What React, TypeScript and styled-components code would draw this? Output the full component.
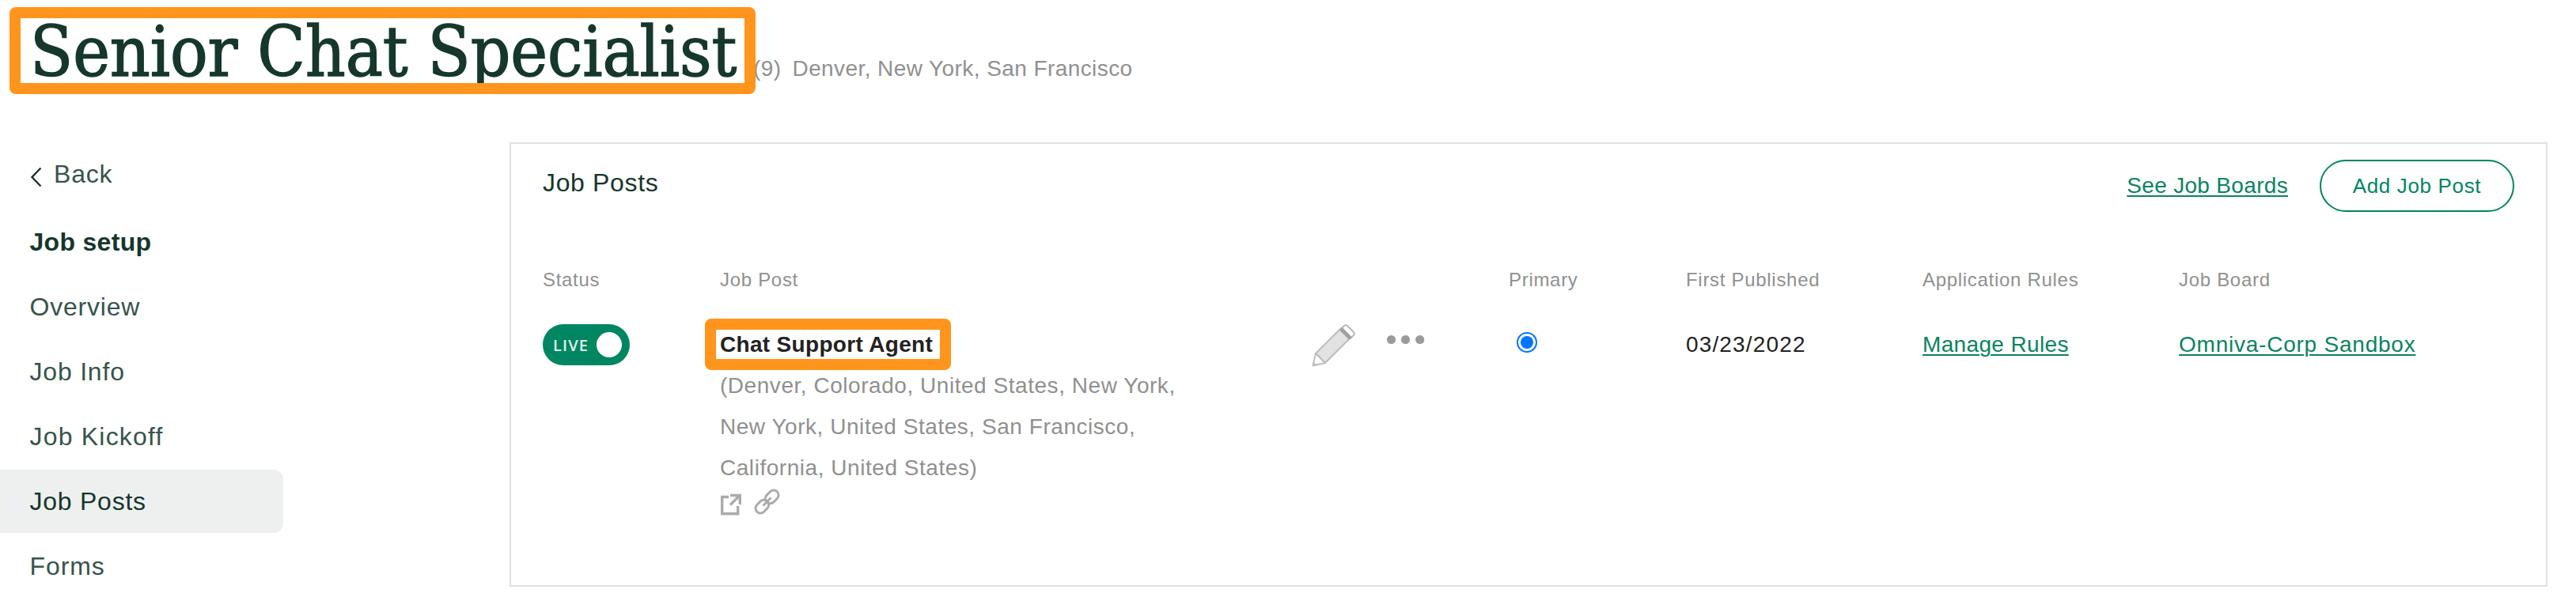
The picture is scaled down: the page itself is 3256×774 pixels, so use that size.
import React from 'react';
import styled, { createGlobalStyle } from 'styled-components';

const GlobalStyle = createGlobalStyle`
  * { box-sizing: border-box; }
  body {
    margin: 0;
    background: #fff;
    font-family: 'Liberation Sans', Arial, sans-serif;
    color: #222;
  }
`;

const Page = styled.div`
  width: 3256px;
  height: 774px;
  overflow: hidden;
`;

const Header = styled.header`
  display: flex;
  align-items: baseline;
  height: 180px;
  padding: 9px 0 0 38px;
`;

const TitleWrap = styled.div`
  position: relative;
  width: 914px;
`;

const Title = styled.h1`
  margin: 0;
  font-family: 'DejaVu Serif Condensed', 'DejaVu Serif', serif;
  font-stretch: condensed;
  font-size: 88px;
  font-weight: 400;
  line-height: 114px;
  letter-spacing: -0.1px;
  white-space: nowrap;
  color: #15372c;
  -webkit-text-stroke: 1.4px #15372c;
`;

/* Orange callout frame drawn over the text it surrounds */
const Frame = styled.div<{ $x: number; $y: number; $w: number; $h: number }>`
  position: absolute;
  left: ${(p) => p.$x}px;
  top: ${(p) => p.$y}px;
  width: ${(p) => p.$w}px;
  height: ${(p) => p.$h}px;
  border: 14px solid #ff951c;
  border-radius: 8px;
`;

const Meta = styled.div<{ $gap?: number }>`
  margin-left: ${(p) => p.$gap ?? 0}px;
  font-size: 28px;
  letter-spacing: 0.42px;
  white-space: nowrap;
  color: #909090;
`;

const Body = styled.div`
  display: flex;
  align-items: flex-start;
`;

const Sidebar = styled.nav`
  display: flex;
  flex-direction: column;
  gap: 2px;
  width: 358px;
  margin-right: 286px;
`;

const NavItem = styled.a<{ $active?: boolean; $strong?: boolean; $spacing: number }>`
  display: flex;
  align-items: center;
  height: 80px;
  padding-left: 37.5px;
  border-radius: 0 12px 12px 0;
  font-size: 32px;
  white-space: nowrap;
  font-weight: ${(p) => (p.$strong ? 700 : 400)};
  letter-spacing: ${(p) => p.$spacing}px;
  color: ${(p) => (p.$active || p.$strong ? '#15372c' : '#36544a')};
  background: ${(p) => (p.$active ? '#eef0ef' : 'transparent')};
`;

const BackLink = styled(NavItem)`
  height: 84px;
  gap: 12.5px;
  padding-bottom: 3px;

  svg { margin-top: 7px; }
`;

const Panel = styled.main`
  width: 2576px;
  height: 562px;
  padding: 20px 40px;
  border: 2px solid #e1e1e1;
`;

const PanelHead = styled.div`
  display: flex;
  align-items: center;
  height: 66px;
  margin-bottom: 66px;
`;

const PanelTitle = styled.h2`
  flex: 1;
  margin: 0;
  padding-bottom: 8px;
  font-size: 32px;
  font-weight: 400;
  letter-spacing: 0.65px;
  color: #15372c;
`;

const TextLink = styled.a<{ $spacing: number }>`
  font-size: 28px;
  letter-spacing: ${(p) => p.$spacing}px;
  white-space: nowrap;
  color: #0b8461;
  text-decoration: underline;
  text-decoration-thickness: 2px;
  text-underline-offset: 3px;
`;

const OutlineButton = styled.button`
  width: 246px;
  height: 66px;
  margin-left: 40px;
  padding: 1px 0 0;
  border: 2px solid #008661;
  border-radius: 33px;
  background: #fff;
  font: 26px 'Liberation Sans', Arial, sans-serif;
  letter-spacing: 0.65px;
  color: #008661;
`;

const Row = styled.div`
  display: grid;
  grid-template-columns: 224px 748px 249px 224px 299px 324px 1fr;
`;

const LabelRow = styled(Row)`
  margin-bottom: 36px;
  font-size: 24px;
  line-height: 40px;
  letter-spacing: 0.7px;
  color: #909090;
`;

const PostRow = styled(Row)`
  font-size: 28px;
  line-height: 52px;
`;

const Toggle = styled.div`
  display: flex;
  align-items: center;
  justify-content: space-between;
  width: 110px;
  height: 52px;
  padding: 0 10px 0 13px;
  border-radius: 26px;
  background: #008661;
  font: 600 20px 'Open Sans', sans-serif;
  letter-spacing: 1.1px;
  color: #e2f2ed;
`;

const Knob = styled.span`
  width: 32px;
  height: 32px;
  border-radius: 50%;
  background: #fff;
`;

const PostCell = styled.div`
  position: relative;
`;

const PostName = styled.div`
  font-weight: 700;
  letter-spacing: 0.32px;
`;

const Places = styled.div`
  width: 600px;
  letter-spacing: 0.54px;
  color: #909090;
`;

const PlaceLine = styled.div`
  white-space: nowrap;
`;

const PostIcons = styled.div`
  display: flex;
  gap: 16px;
`;

const Actions = styled.div`
  display: flex;
  gap: 38px;
`;

const RadioCell = styled.div`
  padding: 10px 0 0 10px;
`;

const Radio = styled.span`
  display: flex;
  align-items: center;
  justify-content: center;
  width: 26px;
  height: 26px;
  border: 2px solid #0075ff;
  border-radius: 50%;

  &::after {
    content: '';
    width: 16px;
    height: 16px;
    border-radius: 50%;
    background: #0075ff;
  }
`;

const DateText = styled.div`
  letter-spacing: 1.15px;
`;

const Chevron = () => (
  <svg width="18" height="26" viewBox="0 0 18 26" fill="none" stroke="#15372c" strokeWidth="2.4">
    <path d="M13.500 1.500 2.500 13l11 11.500" />
  </svg>
);

const Pencil = () => (
  <svg width="56" height="56" viewBox="0 0 56 56" strokeLinejoin="round">
    <path d="M5 37 37 5l12 12-32 32z" fill="#e2e2e2" stroke="#bdbdbd" strokeWidth="2" />
    <path d="M5 37 1.500 52.500 17 49z" fill="#fff" stroke="#bdbdbd" strokeWidth="2" />
    <path d="m1.500 53 1-5 4 4z" fill="#bdbdbd" />
    <path d="m38 5 3-3q2-1.500 4 0l8 8q1.500 2 0 4l-3.500 3.500z" fill="#fff" stroke="#b8b8b8" strokeWidth="2" />
    <path d="m37 6 12 12" stroke="#a0a0a0" strokeWidth="5" />
  </svg>
);

const Dots = () => (
  <svg width="50" height="40" viewBox="0 0 50 40" fill="#9b9b9b">
    <circle cx="6.500" cy="19.500" r="5.600" />
    <circle cx="24.500" cy="19.500" r="5.600" />
    <circle cx="42.700" cy="19.500" r="5.600" />
  </svg>
);

const ExternalIcon = () => (
  <svg width="27" height="34" viewBox="0 0 27 34" fill="none" stroke="#ababab" strokeWidth="3.400">
    <path d="M11 10.500H2.700v21.300h20V22" />
    <path d="M13 8.500h12.300V20M24.500 9 13 20.500" />
  </svg>
);

const LinkIcon = () => (
  <svg width="34" height="34" viewBox="0 0 34 34" fill="none" stroke="#ababab" strokeWidth="3">
    <g transform="rotate(-45 16.500 16.500)">
      <rect x="-1.500" y="10.300" width="18.500" height="12.400" rx="6.200" />
      <rect x="16" y="10.300" width="18.500" height="12.400" rx="6.200" />
      <path d="M9.500 16.500h14" />
    </g>
  </svg>
);

const navItems = [
  { label: 'Overview', spacing: 0.8 },
  { label: 'Job Info', spacing: 0.8 },
  { label: 'Job Kickoff', spacing: 1.2 },
  { label: 'Job Posts', spacing: 0.75, active: true },
  { label: 'Forms', spacing: 0.9 },
];

const labels = ['Status', 'Job Post', '', 'Primary', 'First Published', 'Application Rules', 'Job Board'];

const places = [
  '(Denver, Colorado, United States, New York,',
  'New York, United States, San Francisco,',
  'California, United States)',
];

export default function App() {
  return (
    <Page>
      <GlobalStyle />
      <Header>
        <TitleWrap>
          <Title>Senior Chat Specialist</Title>
          <Frame $x={-26} $y={0} $w={943} $h={110} />
        </TitleWrap>
        <Meta>(9)</Meta>
        <Meta $gap={14}>Denver, New York, San Francisco</Meta>
      </Header>
      <Body>
        <Sidebar>
          <BackLink $spacing={0.8}>
            <Chevron />
            Back
          </BackLink>
          <NavItem $strong $spacing={0.3}>Job setup</NavItem>
          {navItems.map((item) => (
            <NavItem key={item.label} $active={item.active} $spacing={item.spacing}>
              {item.label}
            </NavItem>
          ))}
        </Sidebar>
        <Panel>
          <PanelHead>
            <PanelTitle>Job Posts</PanelTitle>
            <TextLink $spacing={0.32}>See Job Boards</TextLink>
            <OutlineButton>Add Job Post</OutlineButton>
          </PanelHead>
          <LabelRow>
            {labels.map((label, i) => (
              <span key={i}>{label}</span>
            ))}
          </LabelRow>
          <PostRow>
            <Toggle>
              LIVE
              <Knob />
            </Toggle>
            <PostCell>
              <PostName>Chat Support Agent</PostName>
              <Places>
                {places.map((line) => (
                  <PlaceLine key={line}>{line}</PlaceLine>
                ))}
              </Places>
              <PostIcons>
                <ExternalIcon />
                <LinkIcon />
              </PostIcons>
              <Frame $x={-19} $y={-7} $w={311} $h={65} />
            </PostCell>
            <Actions>
              <Pencil />
              <Dots />
            </Actions>
            <RadioCell>
              <Radio />
            </RadioCell>
            <DateText>03/23/2022</DateText>
            <div>
              <TextLink $spacing={0.35}>Manage Rules</TextLink>
            </div>
            <div>
              <TextLink $spacing={0.77}>Omniva-Corp Sandbox</TextLink>
            </div>
          </PostRow>
        </Panel>
      </Body>
    </Page>
  );
}
